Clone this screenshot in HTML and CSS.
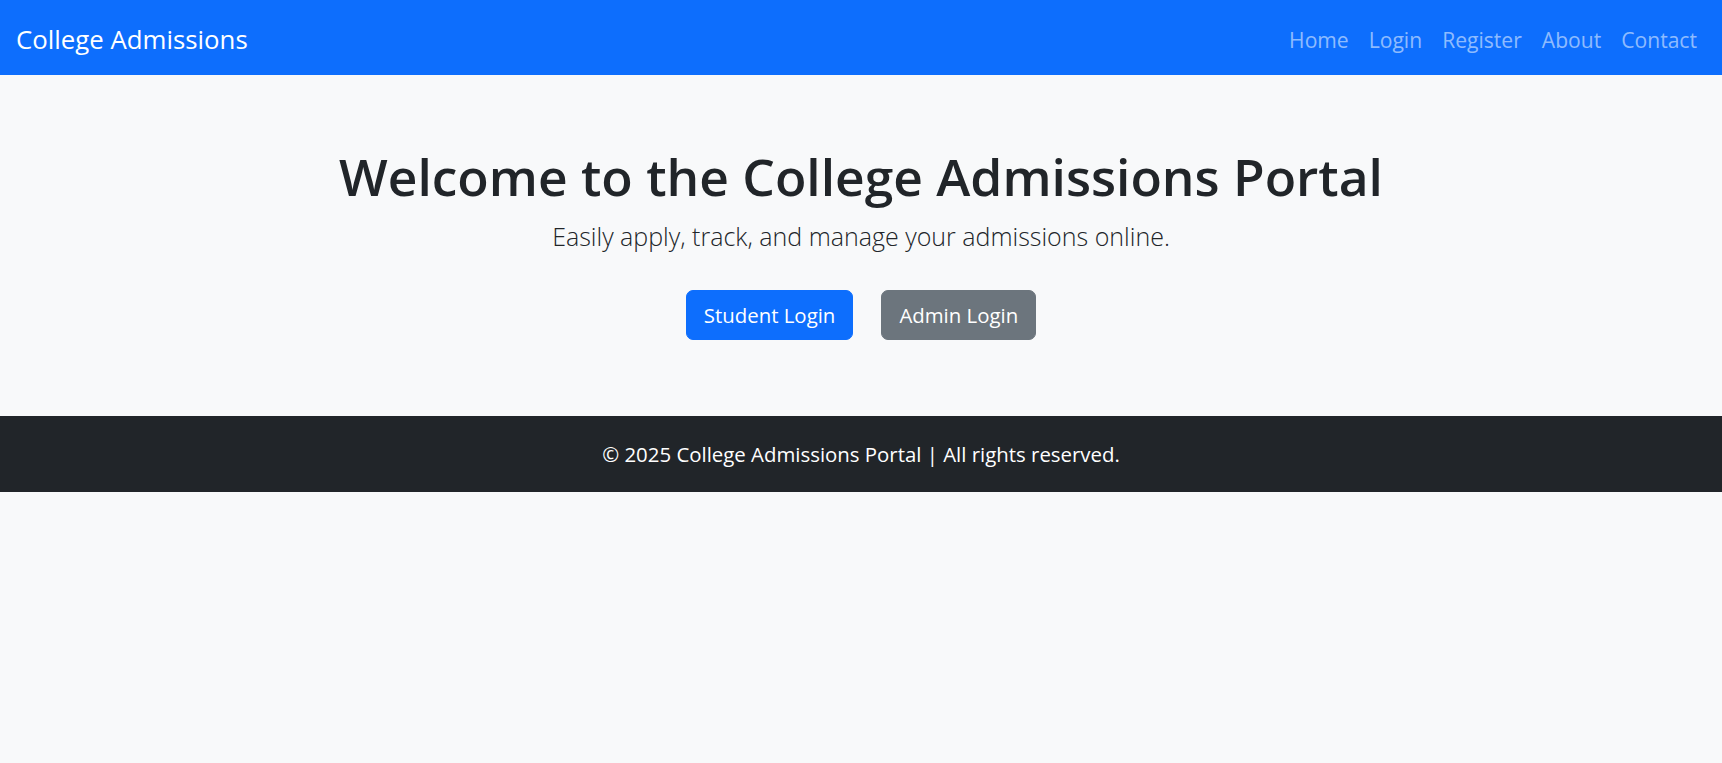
FILE: index.html
```html
<!DOCTYPE html>
<html lang="en">
<head>
<meta charset="utf-8">
<title>College Admissions Portal</title>
<link rel="stylesheet" href="styles.css">
</head>
<body>
<nav class="navbar">
  <div class="nav-inner">
    <a class="brand" href="#">College Admissions</a>
    <ul class="nav-links">
      <li><a href="#">Home</a></li>
      <li><a href="#">Login</a></li>
      <li><a href="#">Register</a></li>
      <li><a href="#">About</a></li>
      <li><a href="#">Contact</a></li>
    </ul>
  </div>
</nav>
<section class="hero">
  <h1 class="hero-title">Welcome to the College Admissions Portal</h1>
  <p class="lead">Easily apply, track, and manage your admissions online.</p>
  <div class="actions">
    <a class="btn btn-primary" href="#">Student Login</a>
    <a class="btn btn-secondary" href="#">Admin Login</a>
  </div>
</section>
<footer class="footer">
  <p class="footer-text">&copy; 2025 College Admissions Portal | All rights reserved.</p>
</footer>
</body>
</html>
```
FILE: styles.css
```css
* { box-sizing: border-box; }
html, body { margin: 0; padding: 0; }
body {
  background: #f8f9fa;
  color: #212529;
  font-family: "Open Sans", "Noto Sans", sans-serif;
  font-size: 20px;
  line-height: 1.5;
}
a { text-decoration: none; }

.navbar {
  background: #0d6efd;
  height: 75px;
}
.nav-inner {
  height: 100%;
  padding: 4px 15px 0 16px;
  display: flex;
  align-items: center;
  justify-content: space-between;
}
.brand {
  color: #fff;
  font-size: 25.8px;
  line-height: 37.5px;
}
.nav-links {
  list-style: none;
  margin: 0;
  padding: 0;
  display: flex;
}
.nav-links a {
  display: block;
  padding: 0 10px;
  color: rgba(255, 255, 255, 0.55);
  font-size: 21.1px;
  line-height: 30px;
}

.hero {
  padding: 71px 15px 76px;
  text-align: center;
}
.hero-title {
  margin: 0 0 12px;
  font-size: 51.5px;
  font-weight: 600;
  line-height: 60px;
}
.lead {
  margin: 0 0 34px;
  font-size: 25px;
  font-weight: 300;
  line-height: 37.5px;
}
.actions {
  display: flex;
  justify-content: center;
  gap: 28px;
}
.btn {
  display: inline-block;
  padding: 9px 17px;
  border: 1px solid transparent;
  border-radius: 7px;
  color: #fff;
  font-size: 20.4px;
  line-height: 30px;
}
.btn-primary { background: #0d6efd; border-color: #0d6efd; }
.btn-secondary { background: #6c757d; border-color: #6c757d; }

.footer {
  background: #212529;
  color: #fff;
  padding: 23px 15px;
  text-align: center;
}
.footer-text {
  margin: 0;
  font-size: 20.4px;
  line-height: 30px;
}
```
